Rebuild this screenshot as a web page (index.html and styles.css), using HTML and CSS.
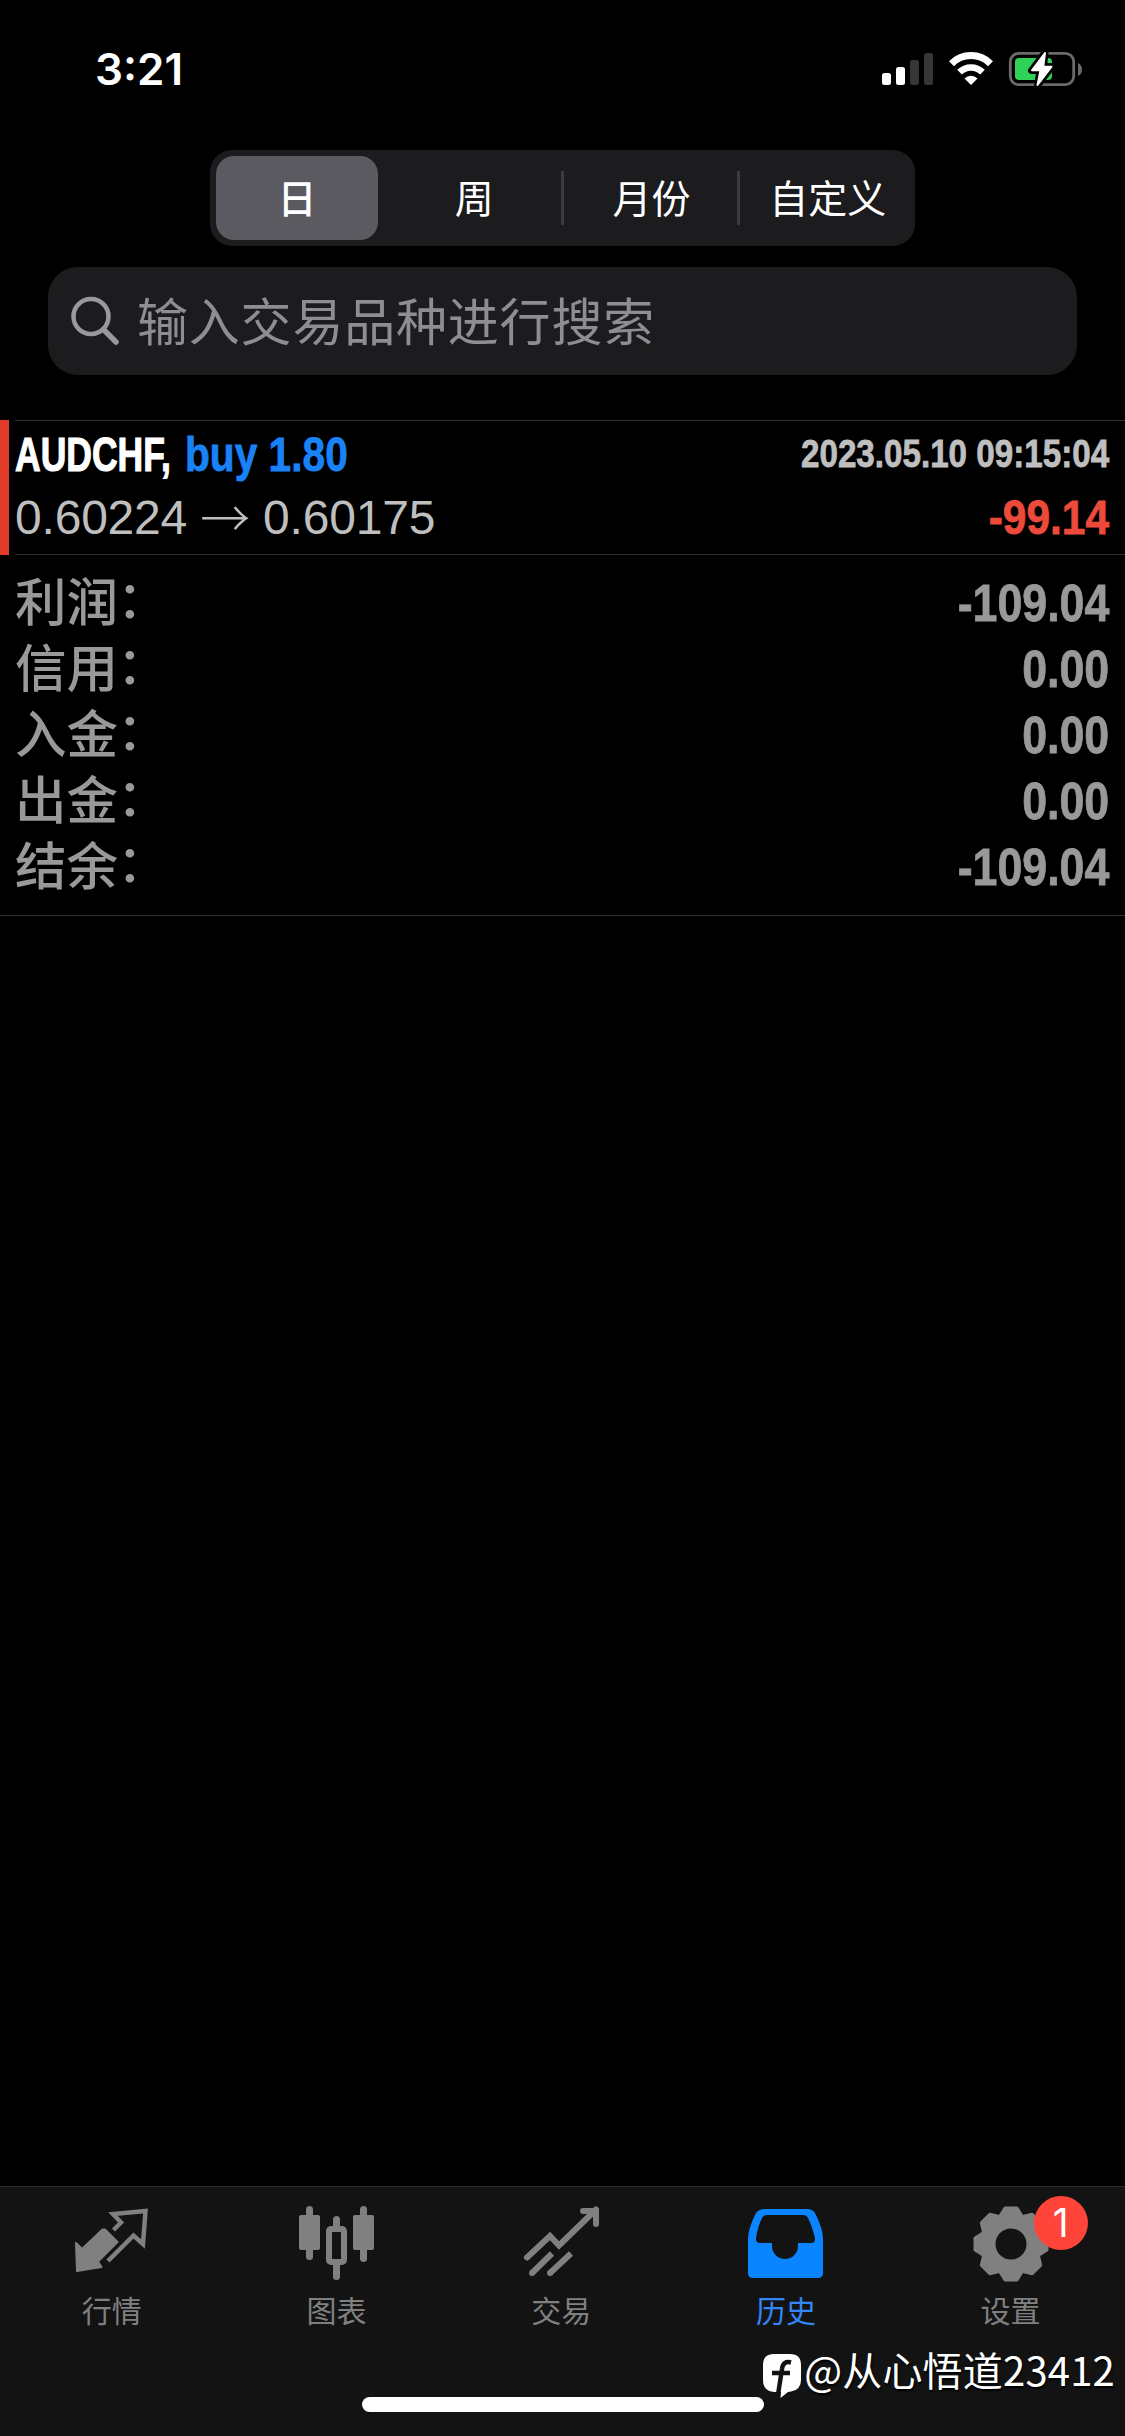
FILE: index.html
```html
<!DOCTYPE html>
<html lang="zh-CN">
<head>
    <meta charset="UTF-8">
    <title>历史</title>
    <link rel="stylesheet" href="styles.css">
</head>
<body>
<header class="status">
    <div class="time">3:21</div>
    <svg class="statusIcons" width="202" height="36" viewBox="0 0 202 36">
        <g fill="#fff">
            <rect x="2" y="22" width="9" height="12" rx="2.5"/>
            <rect x="16" y="16" width="9" height="18" rx="2.5"/>
        </g>
        <g fill="#363636">
            <rect x="30" y="9" width="9" height="25" rx="2.5"/>
            <rect x="44" y="2" width="9" height="32" rx="2.5"/>
        </g>
        <!-- wifi -->
        <g fill="none" stroke="#fff">
            <path d="M71.5 12.7a27.5 27.5 0 0 1 39 0" stroke-width="7"/>
            <path d="M79.5 21.2a16.3 16.3 0 0 1 23 0" stroke-width="6.6"/>
        </g>
        <path d="M84.5 27.4a9.5 9.5 0 0 1 13 0L91 34z" fill="#fff"/>
        <!-- 电池 -->
        <rect x="130.3" y="2.3" width="63.4" height="31.4" rx="8.5" fill="none" stroke="#6b6b6b" stroke-width="2.8"/>
        <path d="M198 12v13q4-2 4-6.500t-4-6.500z" fill="#6b6b6b"/>
        <rect x="135" y="7" width="37" height="22" rx="4" fill="#30d158"/>
        <path d="M165 1.500L151.500 19.500H160L157.500 34.500L172 15.500H163.500z" fill="#fff" stroke="#000" stroke-width="7" stroke-linejoin="round"/>
        <path d="M165 2L152 19.300H160.500L157.500 34L171.500 15.700H163.300z" fill="#fff" stroke="#fff" stroke-width="2" stroke-linejoin="round"/>
    </svg>
</header>

<nav class="segment">
    <a class="on">日</a>
    <a>周</a>
    <a class="line">月份</a>
    <a class="line">自定义</a>
</nav>

<div class="search">
    <svg width="50" height="50" viewBox="0 0 50 50" fill="none" stroke="#98989f" stroke-linecap="round">
        <circle cx="21" cy="20.500" r="17.500" stroke-width="4.500"/>
        <path d="M33.500 33.500L46 46" stroke-width="5.500"/>
    </svg>
    <span>输入交易品种进行搜索</span>
</div>

<section class="deal">
    <div class="row">
        <div class="name"><b class="symbol">AUDCHF,</b><b class="type">buy 1.80</b></div>
        <b class="date">2023.05.10 09:15:04</b>
    </div>
    <div class="row">
        <div class="price"><span>0.60224</span><i>→</i><span>0.60175</span></div>
        <b class="profit">-99.14</b>
    </div>
</section>

<section class="total">
    <div><span>利润<i>：</i></span><b>-109.04</b></div>
    <div><span>信用<i>：</i></span><b>0.00</b></div>
    <div><span>入金<i>：</i></span><b>0.00</b></div>
    <div><span>出金<i>：</i></span><b>0.00</b></div>
    <div><span>结余<i>：</i></span><b>-109.04</b></div>
</section>

<footer class="tabbar">
    <div class="tabs">
        <a>
            <svg width="80" height="80" viewBox="0 0 80 80">
                <path d="M33 25.500L45.500 38L26 57.500L29.500 63L5 67L4 39L10 45L30.500 25.500z" fill="#808080" stroke="#808080" stroke-width="2" stroke-linejoin="round"/>
                <path d="M41.500 26L49 18.500L41 10L73.500 7L71 40L61.500 31.500L36 57" fill="none" stroke="#808080" stroke-width="4.500"/>
            </svg>
            <span>行情</span>
        </a>
        <a>
            <svg width="80" height="80" viewBox="0 0 80 80" fill="#808080">
                <rect x="2" y="11" width="21" height="35" rx="2"/>
                <rect x="9" y="2" width="7" height="54" rx="3.500"/>
                <rect x="56" y="11" width="21" height="35" rx="2"/>
                <rect x="63" y="2" width="7" height="56" rx="3.500"/>
                <rect x="36" y="12" width="7" height="15" rx="3.500"/>
                <rect x="36" y="57" width="7" height="19" rx="3.500"/>
                <rect x="32" y="25" width="15" height="33" rx="2" fill="none" stroke="#808080" stroke-width="6"/>
            </svg>
            <span>图表</span>
        </a>
        <a>
            <svg width="80" height="80" viewBox="0 0 80 80" fill="none" stroke="#808080" stroke-width="6">
                <path d="M5 53.500L28 32L37 41.500L74 5.500" stroke-linecap="round"/>
                <path d="M61 7H74V20" stroke-linecap="round" stroke-linejoin="round"/>
                <path d="M10 69L30 49.500M28 69L49 49.500"/>
                <path d="M10 69h.1M28 69h.1" stroke-linecap="round"/>
            </svg>
            <span>交易</span>
        </a>
        <a class="on">
            <svg width="80" height="80" viewBox="0 0 80 80" fill="#0a84ff">
                <path fill-rule="evenodd" d="M19 5H61Q67 5 69.500 10Q77 25 77 35V69Q77 74 72 74H7Q2 74 2 69V35Q2 25 9.500 10Q12 5 19 5zM21 11Q17.500 11 16 14Q12 22 10 34Q9.500 39 14 39H26V42A13 13 0 0 0 52 42V39H65Q69.500 39 69 34Q66 22 62 14Q60.500 11 57 11z"/>
            </svg>
            <span>历史</span>
        </a>
        <a>
            <svg width="80" height="80" viewBox="-40 -40 80 80">
                <defs>
                    <path id="tooth" d="M-11 -28L-6 -36H6L11 -28z"/>
                </defs>
                <g fill="#808080" stroke="#808080" stroke-width="3" stroke-linejoin="round">
                    <circle r="28"/>
                    <use href="#tooth"/>
                    <use href="#tooth" transform="rotate(45)"/>
                    <use href="#tooth" transform="rotate(90)"/>
                    <use href="#tooth" transform="rotate(135)"/>
                    <use href="#tooth" transform="rotate(180)"/>
                    <use href="#tooth" transform="rotate(225)"/>
                    <use href="#tooth" transform="rotate(270)"/>
                    <use href="#tooth" transform="rotate(315)"/>
                </g>
                <circle r="15.500" fill="#131313"/>
            </svg>
            <em class="badge">1</em>
            <span>设置</span>
        </a>
    </div>
    <div class="home"></div>
    <div class="mark">
        <svg width="42" height="46" viewBox="0 0 42 46">
            <path d="M12 1H28Q39 1 39 12V27Q39 37 29 38.500L26 39L18.500 45L19 39H12Q1 38 1 27V12Q1 1 12 1z" fill="#fff"/>
            <path d="M29 9.500Q21 7.500 20 16L15.500 45M10 20H28" fill="none" stroke="#131313" stroke-width="4.500"/>
        </svg>
        <span>@从心悟道23412</span>
    </div>
</footer>
</body>
</html>
```
FILE: styles.css
```css
* {
    margin: 0;
    padding: 0;
    box-sizing: border-box;
}

body {
    display: flex;
    flex-direction: column;
    width: 1125px;
    height: 2436px;
    background: #000;
    color: #fff;
    font-family: "Liberation Sans", "Noto Sans CJK SC", sans-serif;
    overflow: hidden;
}

i, em {
    font-style: normal;
}

.status {
    display: flex;
    justify-content: space-between;
    height: 150px;
    padding: 51px 43px 0 95px;
}

.time {
    height: 36px;
    line-height: 36px;
    font-family: Inter, sans-serif;
    font-size: 44px;
    font-weight: 600;
}

.segment {
    display: grid;
    grid-template-columns: repeat(4, 1fr);
    align-items: center;
    width: 705px;
    height: 96px;
    margin: 0 auto;
    border-radius: 22px;
    background: #1c1c1f;
    font-family: "Noto Sans CJK SC", sans-serif;
    font-size: 39px;
    line-height: 51px;
    text-align: center;
}

.segment a {
    padding-bottom: 3px;
}

.segment .on {
    height: 84px;
    margin: 0 8px 0 6px;
    border-radius: 18px;
    background: #5b5a60;
    line-height: 81px;
    font-weight: 500;
}

.segment .line {
    margin-left: -2px;
    padding-left: 1px;
    border-left: 3px solid #3a3a3f;
}

.search {
    display: flex;
    align-items: center;
    height: 108px;
    margin: 21px 48px 0;
    padding-left: 22px;
    border-radius: 30px;
    background: #1c1c1e;
    color: #8d8d92;
    font-family: "Noto Sans CJK SC", sans-serif;
    font-size: 51px;
    letter-spacing: 0.8px;
}

.search span {
    margin-left: 17px;
    padding-bottom: 3px;
    line-height: 105px;
}

.deal {
    height: 135px;
    margin-top: 45px;
    padding: 3px 16px 0 6px;
    border-left: 9px solid #e33b2a;
    background: linear-gradient(#2e2e2e, #2e2e2e) 6px 0 / 100% 1px no-repeat, linear-gradient(#2e2e2e, #2e2e2e) 6px 100% / 100% 1px no-repeat;
}

.row {
    display: flex;
    justify-content: space-between;
    height: 64px;
    line-height: 62px;
}

.name {
    font-size: 49px;
}

/* 窄体字 */
.name b, .date, .profit, .total b {
    display: inline-block;
    white-space: nowrap;
    transform-origin: right center;
    -webkit-text-stroke: 0.8px currentColor;
}

.name .symbol {
    width: 170px;
    transform: scaleX(0.725);
    transform-origin: left center;
    -webkit-text-stroke-width: 1.2px;
}

.name .type {
    color: #1a82f7;
    transform: scaleX(0.83);
    transform-origin: left center;
}

.date {
    color: #bfbfbf;
    font-size: 39px;
    transform: scaleX(0.851);
}

.price {
    display: flex;
    color: #bfbfbf;
    font-size: 48px;
    letter-spacing: -0.2px;
}

.price i {
    width: 76px;
    font-family: "Noto Sans CJK SC", sans-serif;
    font-size: 50px;
    font-weight: 300;
    line-height: 57px;
    text-align: center;
}

.profit {
    color: #ec4a3a;
    font-size: 48px;
    transform: scaleX(0.885);
}

.total {
    height: 361px;
    padding: 16px 16px 0 15px;
    border-bottom: 1px solid #2e2e2e;
    color: #999;
}

.total div {
    display: flex;
    justify-content: space-between;
    height: 66px;
    line-height: 65px;
}

.total span {
    font-family: "Noto Sans CJK SC", sans-serif;
    font-size: 51.5px;
    font-weight: 500;
    line-height: 55px;
}

.total i {
    margin-left: -1px;
    line-height: 0;
    vertical-align: 3px;
}

.total b {
    font-size: 52px;
    transform: scaleX(0.86);
}

.tabbar {
    position: relative;
    height: 250px;
    margin-top: auto;
    border-top: 1px solid #2c2c2c;
    background: #131313;
}

.tabs {
    display: grid;
    grid-template-columns: repeat(5, 224.7px);
    height: 150px;
}

.tabs a {
    position: relative;
    display: flex;
    flex-direction: column;
    align-items: center;
    padding-top: 17px;
    color: #808080;
    font-family: "Noto Sans CJK SC", sans-serif;
    font-size: 30px;
    line-height: 44px;
}

.tabs .on {
    color: #3386f5;
}

.tabs svg {
    display: block;
    margin-bottom: 3px;
}

.tabs span {
    padding-right: 1px;
}

.badge {
    position: absolute;
    left: 135px;
    top: 9px;
    width: 54px;
    height: 54px;
    border-radius: 50%;
    background: #ff453a;
    color: #fff;
    font-family: Inter, sans-serif;
    font-size: 39px;
    line-height: 53px;
    text-align: center;
}

.home {
    width: 402px;
    height: 15px;
    margin: 60px auto 0;
    border-radius: 8px;
    background: #fff;
}

.mark {
    position: absolute;
    right: 10px;
    top: 152px;
    display: flex;
    align-items: center;
    height: 60px;
    font-family: "Noto Sans CJK SC", sans-serif;
    font-size: 40px;
    letter-spacing: 0.2px;
    line-height: 60px;
    text-shadow: 1px 2px 2px #000;
}

.mark svg {
    margin: 14px 0 0 0;
}
```
